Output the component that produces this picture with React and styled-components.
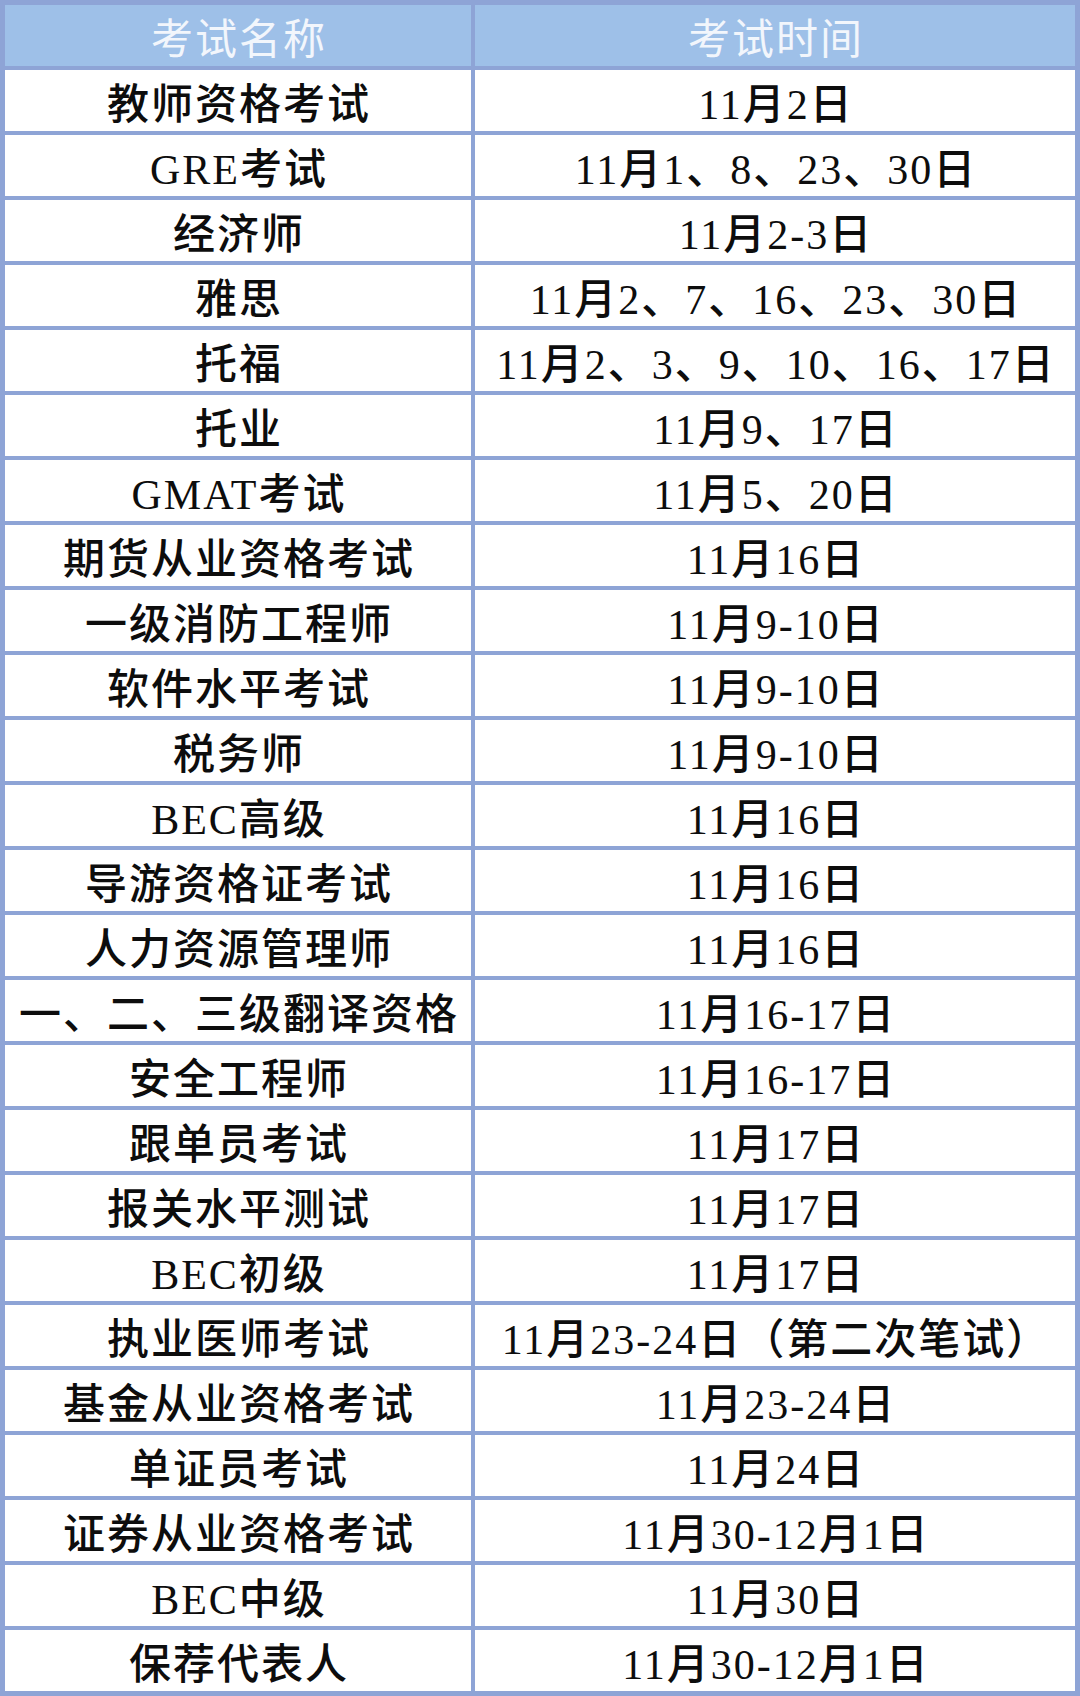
import { Fragment } from "react";
import styled, { createGlobalStyle } from "styled-components";

const GlobalStyle = createGlobalStyle`
  html, body {
    margin: 0;
    padding: 0;
    background: #ffffff;
  }
`;

const Table = styled.div`
  width: 1080px;
  box-sizing: border-box;
  padding: 5px;
  background: #8ea4d6;
  display: grid;
  grid-template-columns: 466px 1fr;
  grid-auto-rows: 61px;
  gap: 4px;
`;

const Cell = styled.div`
  display: flex;
  align-items: center;
  justify-content: center;
  white-space: nowrap;
  background: ${(p) => (p.$head ? "#9ec0e8" : "#ffffff")};
  color: ${(p) => (p.$head ? "#f2f6fc" : "#0d0d0d")};
  font-family: "Liberation Serif", "Noto Sans CJK SC", serif;
  font-size: 42px;
  font-weight: ${(p) => (p.$head ? 400 : 500)};
  letter-spacing: 2px;
  padding-left: 2px;
`;

const rows = [
  ["教师资格考试", "11月2日"],
  ["GRE考试", "11月1、8、23、30日"],
  ["经济师", "11月2-3日"],
  ["雅思", "11月2、7、16、23、30日"],
  ["托福", "11月2、3、9、10、16、17日"],
  ["托业", "11月9、17日"],
  ["GMAT考试", "11月5、20日"],
  ["期货从业资格考试", "11月16日"],
  ["一级消防工程师", "11月9-10日"],
  ["软件水平考试", "11月9-10日"],
  ["税务师", "11月9-10日"],
  ["BEC高级", "11月16日"],
  ["导游资格证考试", "11月16日"],
  ["人力资源管理师", "11月16日"],
  ["一、二、三级翻译资格", "11月16-17日"],
  ["安全工程师", "11月16-17日"],
  ["跟单员考试", "11月17日"],
  ["报关水平测试", "11月17日"],
  ["BEC初级", "11月17日"],
  ["执业医师考试", "11月23-24日（第二次笔试）"],
  ["基金从业资格考试", "11月23-24日"],
  ["单证员考试", "11月24日"],
  ["证券从业资格考试", "11月30-12月1日"],
  ["BEC中级", "11月30日"],
  ["保荐代表人", "11月30-12月1日"],
];

export default function App() {
  return (
    <>
      <GlobalStyle />
      <Table>
        <Cell $head>考试名称</Cell>
        <Cell $head>考试时间</Cell>
        {rows.map(([name, date]) => (
          <Fragment key={name}>
            <Cell>{name}</Cell>
            <Cell>{date}</Cell>
          </Fragment>
        ))}
      </Table>
    </>
  );
}
